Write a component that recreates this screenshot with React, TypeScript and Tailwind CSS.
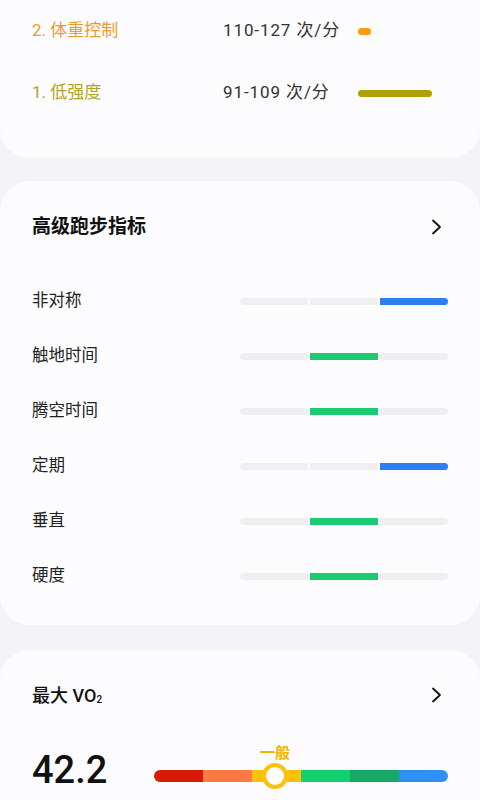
import React from 'react';

const zones = [
  { label: '2. 体重控制', range: '110-127 次/分', color: 'text-[#ec9b2a]', bar: 'bg-[#ff9a0a] w-[13px]' },
  { label: '1. 低强度', range: '91-109 次/分', color: 'text-[#b2a31b]', bar: 'bg-[#b0a005] w-[74px]' },
];

const metrics = [
  { name: '非对称', seg: 2, color: 'bg-[#2b7ff0]' },
  { name: '触地时间', seg: 1, color: 'bg-[#1bcb72]' },
  { name: '腾空时间', seg: 1, color: 'bg-[#1bcb72]' },
  { name: '定期', seg: 2, color: 'bg-[#2b7ff0]' },
  { name: '垂直', seg: 1, color: 'bg-[#1bcb72]' },
  { name: '硬度', seg: 1, color: 'bg-[#1bcb72]' },
];

const scale = ['bg-[#d81b06]', 'bg-[#ff7a42]', 'bg-[#ffc10a]', 'bg-[#14cf6e]', 'bg-[#17a864]', 'bg-[#2e8ff5]'];

function Chevron() {
  return (
    <svg width="12" height="16" viewBox="0 0 12 16" fill="none">
      <polyline points="2,1.5 9,8 2,14.5" stroke="#111" strokeWidth="1.8" strokeLinecap="round" strokeLinejoin="round" />
    </svg>
  );
}

function SegBar({ seg, color }: { seg: number; color: string }) {
  return (
    <div className="flex w-[208px] h-[7px] gap-[2px] rounded-full overflow-hidden">
      {[0, 1, 2].map((i) => (
        <div key={i} className={`flex-1 ${i === seg ? color : 'bg-[#efeff1]'}`} />
      ))}
    </div>
  );
}

export default function App() {
  return (
    <div className="w-[480px] h-[800px] overflow-hidden bg-[#f4f4f6] font-['Roboto','Noto_Sans_CJK_SC',sans-serif]">
      {/* heart-rate zones tail */}
      <div className="bg-[#fcfcfe] rounded-b-[30px] pb-[34px]">
        {zones.map((z) => (
          <div key={z.label} className="h-[62px] flex items-center pl-[32px]">
            <span className={`w-[191px] text-[17px] ${z.color}`}>{z.label}</span>
            <span className="w-[135px] text-[17px] tracking-[0.9px] text-[#333]">{z.range}</span>
            <div className={`h-[7px] rounded-full ${z.bar}`} />
          </div>
        ))}
      </div>

      {/* advanced running metrics */}
      <div className="mt-[23px] bg-[#fcfcfe] rounded-[30px] pt-[32px] pb-[21px]">
        <div className="h-[28px] flex items-center justify-between pl-[32px] pr-[37px]">
          <span className="text-[19px] font-semibold text-[#111]">高级跑步指标</span>
          <Chevron />
        </div>
        <div className="mt-[33px]">
          {metrics.map((m) => (
            <div key={m.name} className="h-[55px] flex items-center justify-between pl-[32px] pr-[32px]">
              <span className="text-[16.5px] text-[#222]">{m.name}</span>
              <SegBar seg={m.seg} color={m.color} />
            </div>
          ))}
        </div>
      </div>

      {/* VO2 max */}
      <div className="mt-[25px] bg-[#fcfcfe] rounded-t-[30px] pt-[31px] pb-[40px]">
        <div className="h-[28px] flex items-center justify-between pl-[32px] pr-[37px]">
          <span className="text-[18px] font-medium text-[#111]">
            最大 VO<span className="text-[10px] align-[-1px]">2</span>
          </span>
          <Chevron />
        </div>
        <div className="mt-[42px] flex items-end pl-[32px] pr-[32px]">
          <span className="w-[122px] text-[38px] leading-[38px] font-medium text-[#111] mb-[-2px]">42.2</span>
          <div className="flex-1 flex flex-col">
            <div className="relative h-[12px] flex rounded-full mb-[5px]">
              <span className="absolute left-[121px] -translate-x-1/2 -top-[26px] text-[15px] leading-[18px] font-semibold text-[#f3b400]">一般</span>
              <div className="flex w-full h-[12px] rounded-full overflow-hidden">
                {scale.map((c) => (
                  <div key={c} className={`flex-1 ${c}`} />
                ))}
              </div>
              <div className="absolute left-[121px] top-1/2 -translate-x-1/2 -translate-y-1/2 w-[26px] h-[26px] rounded-full border-[4px] border-[#ffc10a] bg-white" />
            </div>
          </div>
        </div>
      </div>
    </div>
  );
}
